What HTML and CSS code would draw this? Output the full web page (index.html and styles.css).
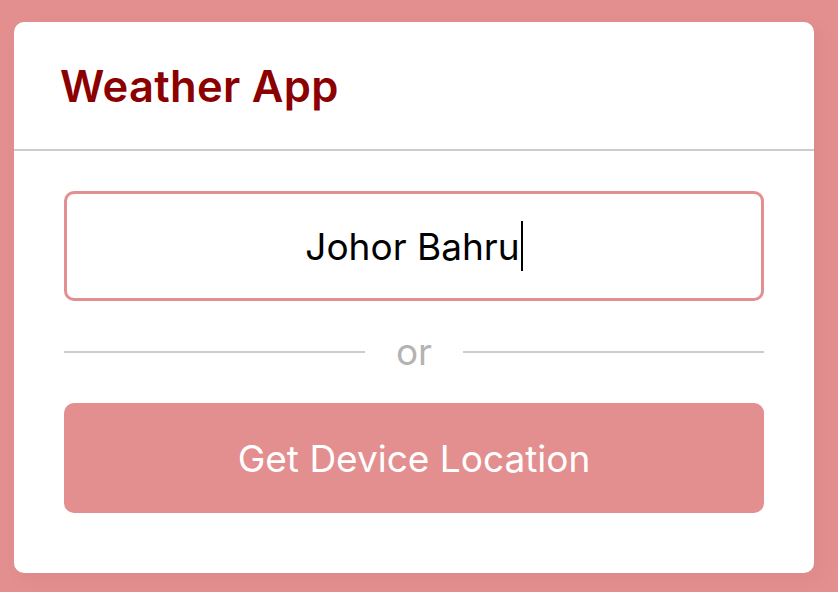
FILE: index.html
```html
<!DOCTYPE html>
<html lang="en">
<head>
<meta charset="utf-8">
<title>Weather App</title>
<link rel="stylesheet" href="styles.css">
</head>
<body>
  <main class="card">
    <header class="card-header">
      <h1 class="title">Weather App</h1>
    </header>
    <section class="card-body">
      <div class="city-input"><span class="city-text">Johor Bahru</span><span class="caret"></span></div>
      <div class="divider"><span class="line"></span><span class="or">or</span><span class="line"></span></div>
      <button class="locate-btn" type="button">Get Device Location</button>
    </section>
  </main>
</body>
</html>
```
FILE: styles.css
```css
* { box-sizing: border-box; }
html, body { margin: 0; }
body {
  width: 838px;
  height: 592px;
  background: #e38f90;
  padding: 22px 0 0 14px;
  font-family: "Inter", "DejaVu Sans", sans-serif;
  overflow: hidden;
}
.card {
  width: 800px;
  height: 551px;
  background: #ffffff;
  border-radius: 10px;
  box-shadow: 6px 6px 18px rgba(120, 40, 40, 0.06);
  display: flex;
  flex-direction: column;
}
.card-header {
  height: 129px;
  border-bottom: 2px solid #cccccc;
  display: flex;
  align-items: center;
  padding: 0 46px;
}
.title {
  margin: 0;
  font-size: 43.5px;
  font-weight: 600;
  color: #8b0000;
  letter-spacing: 0.3px;
}
.card-body {
  padding: 40px 50px 0;
  display: flex;
  flex-direction: column;
  gap: 31px;
}
.city-input {
  height: 110px;
  border: 3px solid #e38f90;
  border-radius: 10px;
  display: flex;
  align-items: center;
  justify-content: center;
  font-size: 37px;
  color: #000;
}
.caret {
  width: 2px;
  height: 50px;
  background: #000;
  margin-left: 1px;
}
.divider {
  height: 40px;
  display: flex;
  align-items: center;
  gap: 31px;
}
.line {
  flex: 1;
  height: 2px;
  background: #cccccc;
}
.or {
  font-size: 37px;
  color: #b3b3b3;
  line-height: 40px;
}
.locate-btn {
  height: 110px;
  border: none;
  border-radius: 10px;
  background: #e38f90;
  color: #ffffff;
  font-family: inherit;
  font-size: 37px;
  font-weight: 400;
  cursor: pointer;
}
```
